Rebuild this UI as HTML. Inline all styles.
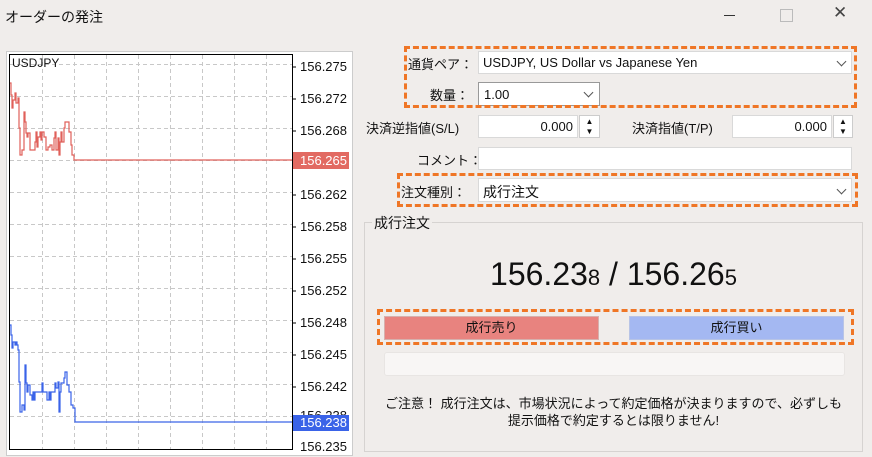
<!DOCTYPE html>
<html><head><meta charset="utf-8"><style>
body{margin:0;width:872px;height:457px;background:#f0edeb;font-family:"Liberation Sans","Noto Sans CJK JP",sans-serif;position:relative;overflow:hidden;color:#111}
.a{position:absolute}
.lbl{font-size:13px;white-space:nowrap}
.box{position:absolute;background:#fff;border:1px solid #d9d9d9;box-sizing:border-box;font-size:13px}
.dash{position:absolute;border:3px dashed #ef7626;box-sizing:border-box}
.chev{position:absolute;width:6px;height:6px;border-right:1px solid #555;border-bottom:1px solid #555;transform:rotate(45deg)}
.yl{position:absolute;left:300px;font-size:13px;color:#111}
</style></head><body>
<div class="a" style="left:5px;top:7px;font-size:14px">オーダーの発注</div>
<div class="a" style="left:724px;top:15px;width:11px;height:1px;background:#333"></div>
<div class="a" style="left:780px;top:9px;width:11px;height:11px;border:1px solid #bbb"></div>
<div class="a" style="left:833px;top:3px;font-size:17px;color:#444">✕</div>

<div class="a" style="left:6px;top:51px;width:347px;height:405px;background:#fff;border:1px solid #ccc;box-sizing:border-box"></div>
<svg class="a" style="left:0;top:0" width="360" height="457">
<g stroke="#c8c8c8" stroke-dasharray="4,3" stroke-width="1">
<line x1="42.5" y1="55" x2="42.5" y2="449"/><line x1="74.5" y1="55" x2="74.5" y2="449"/><line x1="106.5" y1="55" x2="106.5" y2="449"/><line x1="138.5" y1="55" x2="138.5" y2="449"/><line x1="170.5" y1="55" x2="170.5" y2="449"/><line x1="202.5" y1="55" x2="202.5" y2="449"/><line x1="234.5" y1="55" x2="234.5" y2="449"/><line x1="266.5" y1="55" x2="266.5" y2="449"/>
<line x1="10" y1="64.5" x2="292" y2="64.5"/><line x1="10" y1="96.5" x2="292" y2="96.5"/><line x1="10" y1="128.5" x2="292" y2="128.5"/><line x1="10" y1="160.5" x2="292" y2="160.5"/><line x1="10" y1="192.5" x2="292" y2="192.5"/><line x1="10" y1="224.5" x2="292" y2="224.5"/><line x1="10" y1="256.5" x2="292" y2="256.5"/><line x1="10" y1="288.5" x2="292" y2="288.5"/><line x1="10" y1="320.5" x2="292" y2="320.5"/><line x1="10" y1="352.5" x2="292" y2="352.5"/><line x1="10" y1="384.5" x2="292" y2="384.5"/><line x1="10" y1="416.5" x2="292" y2="416.5"/>
</g>
<rect x="9.5" y="54.5" width="283" height="395" fill="none" stroke="#000"/>
<g stroke="#000"><line x1="292" y1="67" x2="296" y2="67"/><line x1="292" y1="99" x2="296" y2="99"/><line x1="292" y1="131" x2="296" y2="131"/><line x1="292" y1="195" x2="296" y2="195"/><line x1="292" y1="227" x2="296" y2="227"/><line x1="292" y1="259" x2="296" y2="259"/><line x1="292" y1="291" x2="296" y2="291"/><line x1="292" y1="323" x2="296" y2="323"/><line x1="292" y1="355" x2="296" y2="355"/><line x1="292" y1="387" x2="296" y2="387"/></g>
<polyline fill="none" stroke="#e0605a" stroke-width="1.2" points="10,83 11,83 11,95 12,95 12,108 13,108 13,100 15,100 15,93 16,93 16,103 18,103 18,98 19,98 19,128 20,128 20,155 22,155 22,150 24,150 24,112 25,112 25,122 26,122 26,133 27,133 27,137 28,137 28,133 30,133 30,150 32,150 32,150 35,150 35,142 36,142 36,132 37,132 37,147 38,147 38,137 40,137 40,132 41,132 41,140 42,140 42,132 44,132 44,137 46,137 46,150 48,150 48,147 50,147 50,145 52,145 52,150 54,150 54,138 55,138 55,132 56,132 56,150 58,150 58,138 59,138 59,155 60,155 60,142 61,142 61,132 62,132 62,142 64,142 64,128 65,128 65,122 67,122 67,122 69,122 69,132 71,132 71,145 72,145 72,155 74,155 74,160 292,160"/>
<polyline fill="none" stroke="#3a63e8" stroke-width="1.2" points="10,325 11,325 11,335 12,335 12,348 13,348 13,342 15,342 15,345 16,345 16,342 17,342 17,345 18,345 18,350 19,350 19,382 20,382 20,412 22,412 22,405 24,405 24,410 25,410 25,365 26,365 26,383 27,383 27,392 28,392 28,385 30,385 30,395 32,395 32,400 33,400 33,392 34,392 34,400 35,400 35,392 42,392 42,383 43,383 43,392 47,392 47,400 49,400 49,392 50,392 50,400 51,400 51,392 54,392 54,392 55,392 55,383 56,383 56,388 58,388 58,382 59,382 59,412 60,412 60,392 61,392 61,383 64,383 64,378 65,378 65,372 67,372 67,385 69,385 69,392 71,392 71,405 73,405 73,408 75,408 75,422 292,422"/>
</svg>
<div class="a" style="left:12px;top:56px;font-size:12px">USDJPY</div>
<div class="yl" style="top:59px">156.275</div>
<div class="yl" style="top:91px">156.272</div>
<div class="yl" style="top:123px">156.268</div>
<div class="a" style="left:293px;top:152px;width:56px;height:17px;background:#e26a62"></div>
<div class="yl" style="top:153px;color:#fff">156.265</div>
<div class="yl" style="top:187px">156.262</div>
<div class="yl" style="top:219px">156.258</div>
<div class="yl" style="top:251px">156.255</div>
<div class="yl" style="top:283px">156.252</div>
<div class="yl" style="top:315px">156.248</div>
<div class="yl" style="top:347px">156.245</div>
<div class="yl" style="top:379px">156.242</div>
<div class="yl" style="top:408px">156.238</div>
<div class="a" style="left:293px;top:415px;width:56px;height:16px;background:#3a63e8"></div>
<div class="yl" style="top:415px;color:#fff">156.238</div>
<div class="yl" style="top:439px">156.235</div>

<div class="lbl a" style="left:408px;top:54px">通貨ペア：</div>
<div class="box" style="left:478px;top:51px;width:374px;height:23px;padding:3px 4px">USDJPY, US Dollar vs Japanese Yen</div>
<div class="chev" style="left:838px;top:58px"></div>
<div class="lbl a" style="left:430px;top:85px">数量：</div>
<div class="box" style="left:478px;top:82px;width:122px;height:24px;padding:4px 5px;border-color:#999">1.00</div>
<div class="chev" style="left:585px;top:89px"></div>
<div class="dash" style="left:404px;top:46px;width:453px;height:62px"></div>

<div class="lbl a" style="left:366px;top:118px">決済逆指値(S/L)</div>
<div class="box" style="left:478px;top:115px;width:100px;height:23px;text-align:right;padding:3px 4px">0.000</div>
<div class="box" style="left:579px;top:115px;width:21px;height:23px;border-color:#ccc;font-size:8px;text-align:center;line-height:10px;padding-top:1px">▲<br>▼</div>
<div class="lbl a" style="left:632px;top:118px">決済指値(T/P)</div>
<div class="box" style="left:732px;top:115px;width:100px;height:23px;text-align:right;padding:3px 4px">0.000</div>
<div class="box" style="left:833px;top:115px;width:20px;height:23px;border-color:#ccc;font-size:8px;text-align:center;line-height:10px;padding-top:1px">▲<br>▼</div>
<div class="lbl a" style="left:417px;top:150px">コメント：</div>
<div class="box" style="left:478px;top:147px;width:374px;height:23px"></div>
<div class="lbl a" style="left:401px;top:182px">注文種別：</div>
<div class="box" style="left:478px;top:178px;width:374px;height:24px;padding:3px 4px;font-size:14px">成行注文</div>
<div class="chev" style="left:838px;top:186px"></div>
<div class="dash" style="left:397px;top:173px;width:461px;height:34px"></div>

<div class="a" style="left:364px;top:222px;width:499px;height:230px;border:1px solid #d6d3d1;box-sizing:border-box"></div>
<div class="lbl a" style="left:372px;top:213px;background:#f0edeb;padding:0 2px;font-size:14px">成行注文</div>
<div class="a" style="left:364px;top:256px;width:499px;text-align:center;font-size:32px;color:#111">156.23<span style="font-size:22px">8</span> / 156.26<span style="font-size:22px">5</span></div>
<div class="dash" style="left:377px;top:309px;width:477px;height:36px"></div>
<div class="a" style="left:384px;top:316px;width:215px;height:24px;background:#e8837f;border:1px solid #d7b0ad;box-sizing:border-box;text-align:center;font-size:13px;line-height:22px">成行売り</div>
<div class="a" style="left:629px;top:316px;width:215px;height:24px;background:#a4b8f2;border:1px solid #b8c4e6;box-sizing:border-box;text-align:center;font-size:13px;line-height:22px">成行買い</div>
<div class="a" style="left:384px;top:352px;width:461px;height:24px;background:#f8f6f5;border:1px solid #e8e5e3;border-radius:3px;box-sizing:border-box"></div>
<div class="a" style="left:364px;top:395px;width:499px;text-align:center;font-size:13px;line-height:17px">ご注意！ 成行注文は、市場状況によって約定価格が決まりますので、必ずしも<br>提示価格で約定するとは限りません!</div>
</body></html>
